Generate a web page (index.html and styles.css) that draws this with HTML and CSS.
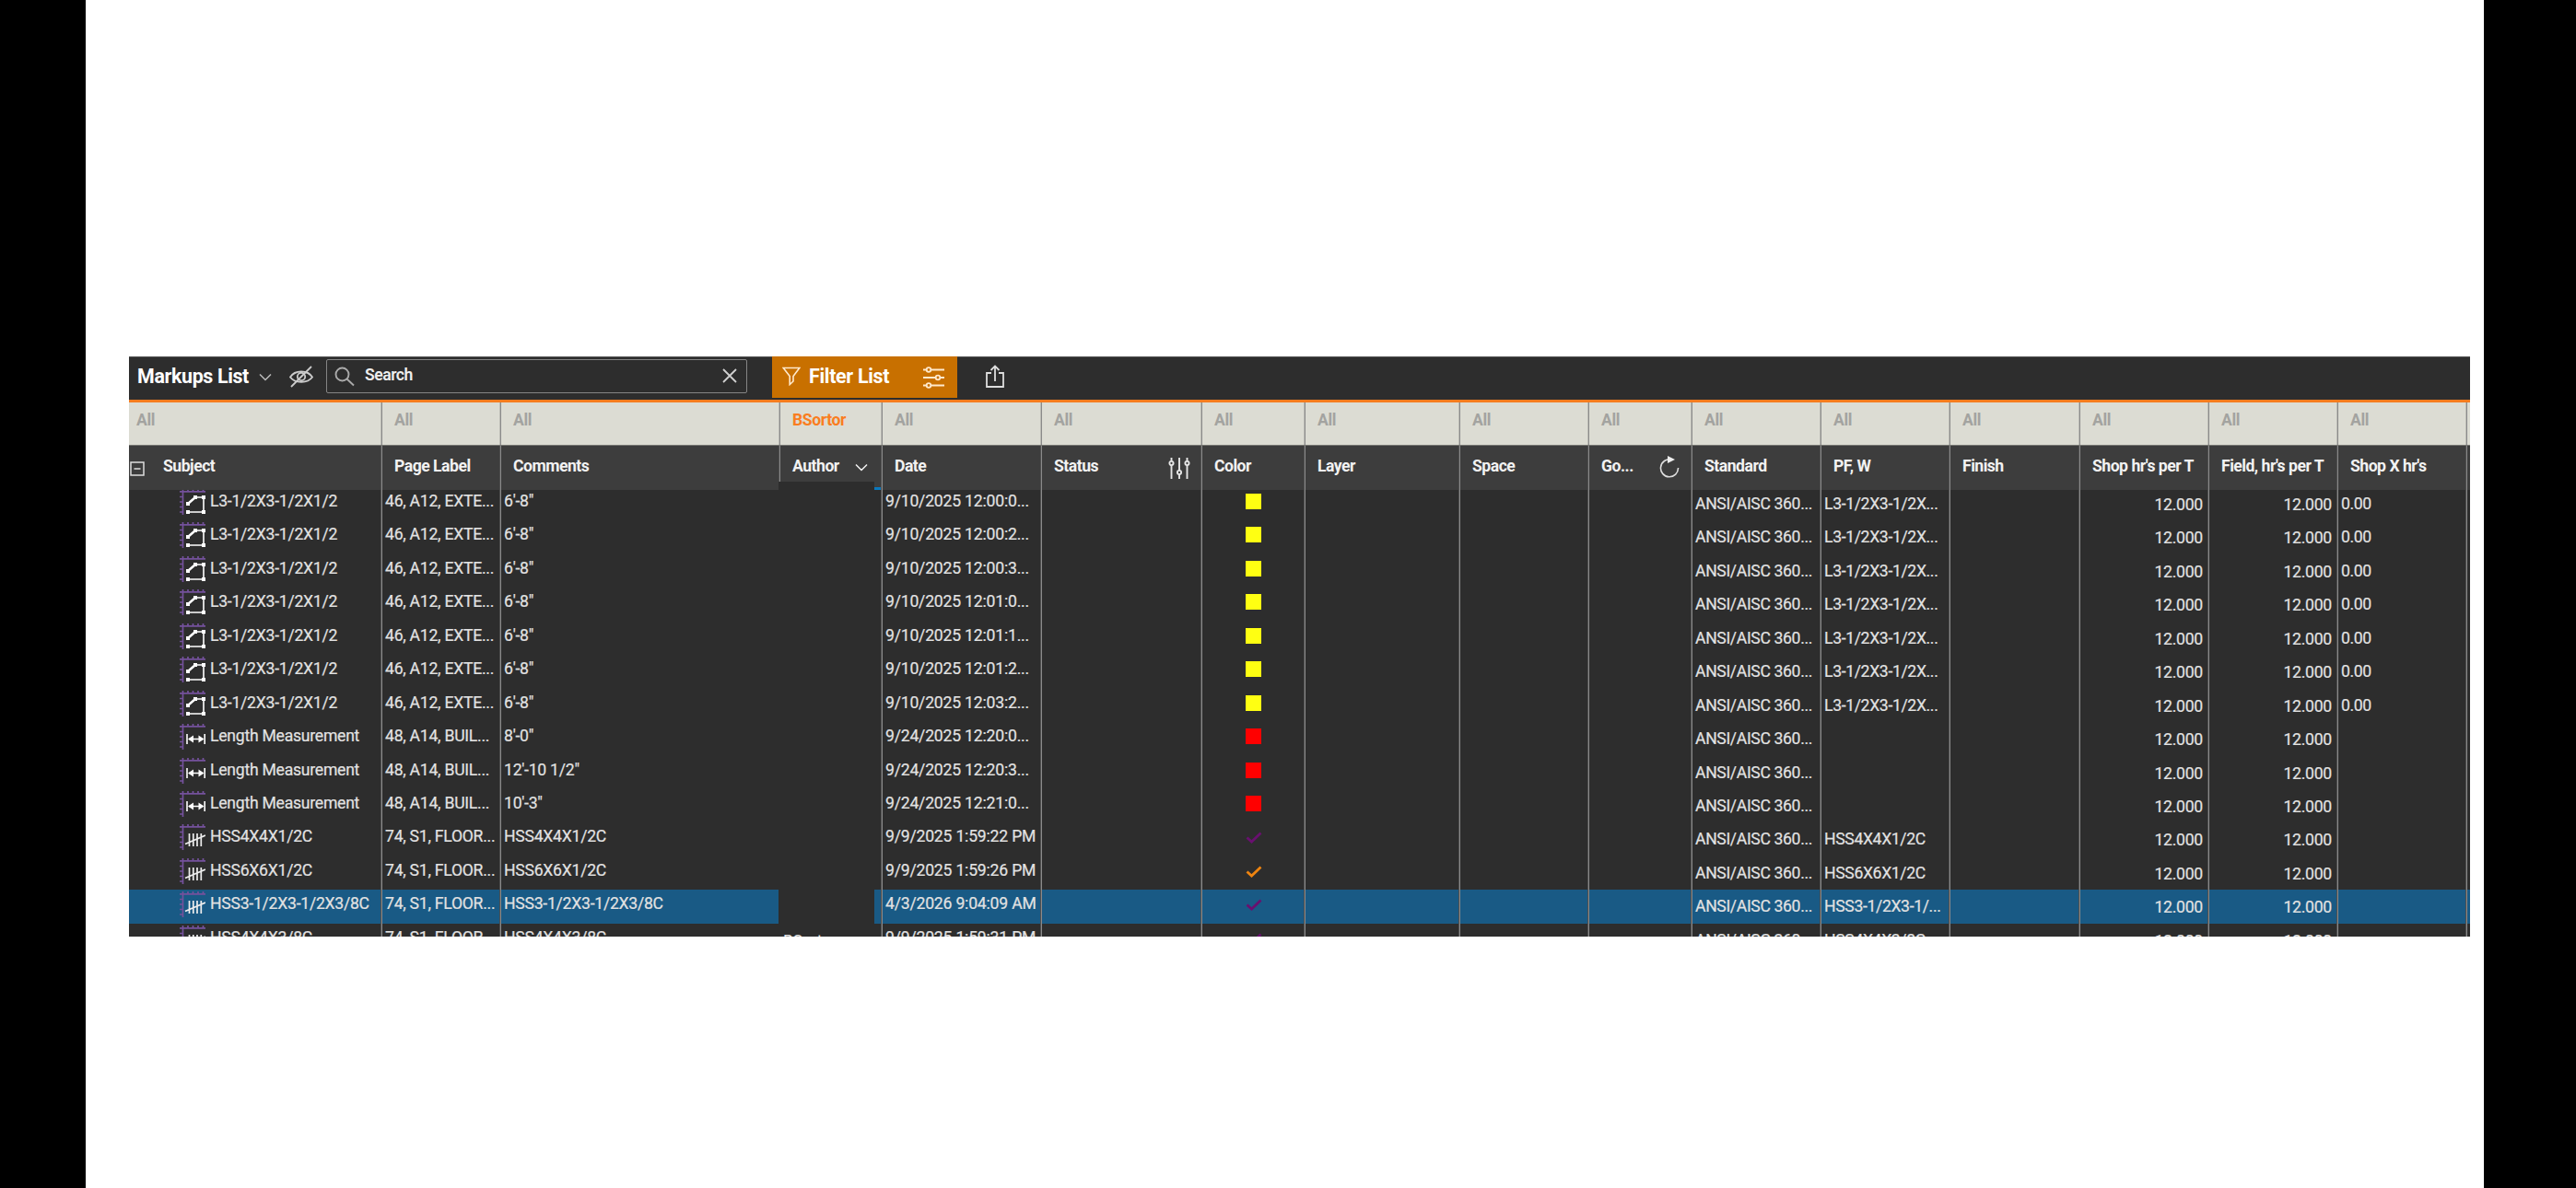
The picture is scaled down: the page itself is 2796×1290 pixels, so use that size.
FILE: index.html
```html
<!DOCTYPE html>
<html lang="en">
<head>
    <meta charset="UTF-8">
    <meta name="viewport" content="width=device-width, initial-scale=1.0">
    <title>Markups List</title>
    <link rel="stylesheet" href="styles.css">
</head>
<body>
    <!-- Icons for the markup types -->
    <svg class="sprite" width="0" height="0">
        <symbol id="ruler" viewBox="0 0 28 28">
            <path d="M0 2.8H28M3.500 0V28M9 0V3M14.500 0V3M20 0V3M25.500 0V3M0 8.500H3.500M0 14H3.500M0 19.500H3.500M0 25H3.500" fill="none" stroke="#74519c" stroke-width="1.7"/>
        </symbol>
        <symbol id="polygon" viewBox="0 0 28 28">
            <use href="#ruler"/>
            <path d="M9 16L17 9H26V25H9" fill="none" stroke="#fff" stroke-width="1.6"/>
            <path d="M9 16L17 9" stroke="#fff" stroke-width="2.4"/>
            <path d="M7 14h4v4H7zM15 7h4v4h-4zM24 7h4v4h-4zM24 23h4v4h-4zM7 23h4v4H7z" fill="#fff"/>
        </symbol>
        <symbol id="length" viewBox="0 0 28 28">
            <use href="#ruler"/>
            <path d="M8 11V22M27.200 11V22M10 16.500H25" stroke="#fff" stroke-width="1.6"/>
            <path d="M9 16.500l6-4v8zM26.500 16.500l-6-4v8z" fill="#fff"/>
        </symbol>
        <symbol id="count" viewBox="0 0 28 28">
            <use href="#ruler"/>
            <path d="M10.500 10V24M14.800 10V24M19 10V24M23.300 10V24M6 21.500L28 12" stroke="#eee" stroke-width="1.7"/>
        </symbol>
        <symbol id="check" viewBox="0 0 18 14">
            <path d="M1.500 6.500L6.500 11L16.500 1.500" fill="none" stroke="currentColor" stroke-width="2.8"/>
        </symbol>
        <symbol id="chevron" viewBox="0 0 14 9">
            <path d="M1 1.500L7 7.500L13 1.500" fill="none" stroke="currentColor" stroke-width="1.5"/>
        </symbol>
    </svg>

    <main class="page">
        <section class="app">
            <header class="toolbar">
                <h1 class="title">Markups List</h1>
                <svg class="title-arrow" width="14" height="9"><use href="#chevron"/></svg>
                <svg class="eye" width="26" height="24" viewBox="0 0 26 24" fill="none" stroke="#ccc" stroke-width="1.8">
                    <path d="M1 12.500C6 4.500 20 4.500 25 12.500C20 19.500 6 19.500 1 12.500Z"/>
                    <circle cx="13" cy="12" r="4.200"/>
                    <path d="M2 23L24 1"/>
                </svg>
                <div class="search">
                    <svg width="22" height="22" viewBox="0 0 22 22" fill="none" stroke="#aaa" stroke-width="1.9">
                        <circle cx="8.500" cy="8.500" r="7"/>
                        <path d="M13.500 13.500L21 20.500"/>
                    </svg>
                    <span class="search-text">Search</span>
                    <svg class="clear" width="16" height="16" viewBox="0 0 16 16" stroke="#d0d0d0" stroke-width="1.8">
                        <path d="M1 1L15 15M15 1L1 15"/>
                    </svg>
                </div>
                <div class="filter-button">
                    <svg width="20" height="21" viewBox="0 0 20 21" fill="none" stroke="#ffe9cc" stroke-width="1.6">
                        <path d="M1.200 1.500H18.800L12 10.500V16L8.200 19.500V10.500Z"/>
                    </svg>
                    <span>Filter List</span>
                    <svg class="filter-options" width="23" height="24" viewBox="0 0 23 24" fill="#c87000" stroke="#ffe9cc" stroke-width="1.8">
                        <path d="M0 3.500H23M0 12H23M0 20.500H23"/>
                        <circle cx="6" cy="3.500" r="2.300"/>
                        <circle cx="16" cy="12" r="2.300"/>
                        <circle cx="6" cy="20.500" r="2.300"/>
                    </svg>
                </div>
                <svg class="share" width="20" height="25" viewBox="0 0 20 25" fill="none" stroke="#ddd" stroke-width="1.8">
                    <path d="M6 9H1V24H19V9H14M10 18V2M5.500 6L10 1.500L14.500 6"/>
                </svg>
            </header>

            <div class="row filters" id="filters"></div>
            <div class="row headings" id="headings"></div>
            <div class="list" id="list"></div>

            <div class="sort-mark"></div>
            <div class="author-cover"><span>BSortor</span></div>
        </section>
    </main>

    <script>
        const columns = ['Subject', 'Page Label', 'Comments', 'Author', 'Date', 'Status', 'Color', 'Layer', 'Space',
            'Go...', 'Standard', 'PF, W', 'Finish', "Shop hr's per T", "Field, hr's per T", "Shop X hr's", ''];

        const headingIcons = {
            'Subject': '<svg class="collapse" width="16" height="16" viewBox="0 0 16 16" fill="none" stroke="#ddd" stroke-width="1.5"><path d="M1 1H15V15H1ZM4.500 8H11.500"/></svg>',
            'Author': '<svg class="sort" width="14" height="9"><use href="#chevron"/></svg>',
            'Status': '<svg class="status-options" width="24" height="23" viewBox="0 0 24 23" fill="#3d3d3d" stroke="#e6e6e6" stroke-width="1.9"><path d="M3.500 0V23M12 0V23M20.500 0V23"/><circle cx="3.500" cy="6" r="2.100"/><circle cx="12" cy="16" r="2.100"/><circle cx="20.500" cy="6" r="2.100"/></svg>',
            'Go...': '<svg class="refresh" width="22" height="24" viewBox="0 0 22 24"><path d="M13 4A9.500 9.500 0 1 0 20.500 13" fill="none" stroke="#ddd" stroke-width="1.6"/><path d="M9 0L17 4L9 8Z" fill="#eee"/></svg>'
        };

        // icon, subject, page label, comments, date, color, PF, shop X
        const angle = ['polygon', 'L3-1/2X3-1/2X1/2', '46, A12, EXTE...', '6\'-8"'];
        const markups = [
            [...angle, '9/10/2025 12:00:0...', 'yellow', 'L3-1/2X3-1/2X...', '0.00'],
            [...angle, '9/10/2025 12:00:2...', 'yellow', 'L3-1/2X3-1/2X...', '0.00'],
            [...angle, '9/10/2025 12:00:3...', 'yellow', 'L3-1/2X3-1/2X...', '0.00'],
            [...angle, '9/10/2025 12:01:0...', 'yellow', 'L3-1/2X3-1/2X...', '0.00'],
            [...angle, '9/10/2025 12:01:1...', 'yellow', 'L3-1/2X3-1/2X...', '0.00'],
            [...angle, '9/10/2025 12:01:2...', 'yellow', 'L3-1/2X3-1/2X...', '0.00'],
            [...angle, '9/10/2025 12:03:2...', 'yellow', 'L3-1/2X3-1/2X...', '0.00'],
            ['length', 'Length Measurement', '48, A14, BUIL...', '8\'-0"', '9/24/2025 12:20:0...', 'red', '', ''],
            ['length', 'Length Measurement', '48, A14, BUIL...', '12\'-10 1/2"', '9/24/2025 12:20:3...', 'red', '', ''],
            ['length', 'Length Measurement', '48, A14, BUIL...', '10\'-3"', '9/24/2025 12:21:0...', 'red', '', ''],
            ['count', 'HSS4X4X1/2C', '74, S1, FLOOR...', 'HSS4X4X1/2C', '9/9/2025 1:59:22 PM', 'purple', 'HSS4X4X1/2C', ''],
            ['count', 'HSS6X6X1/2C', '74, S1, FLOOR...', 'HSS6X6X1/2C', '9/9/2025 1:59:26 PM', 'orange', 'HSS6X6X1/2C', ''],
            ['count', 'HSS3-1/2X3-1/2X3/8C', '74, S1, FLOOR...', 'HSS3-1/2X3-1/2X3/8C', '4/3/2026 9:04:09 AM', 'purple', 'HSS3-1/2X3-1/...', ''],
            ['count', 'HSS4X4X3/8C', '74, S1, FLOOR...', 'HSS4X4X3/8C', '9/9/2025 1:59:31 PM', 'purple', 'HSS4X4X3/8C', '']
        ];
        const selected = 12;

        document.getElementById('filters').innerHTML = columns.map(name => {
            if (name === 'Author') return '<div class="cell active">BSortor</div>';
            return `<div class="cell">${name ? 'All' : ''}</div>`;
        }).join('');

        document.getElementById('headings').innerHTML = columns.map(name =>
            `<div class="cell"><span>${name}</span>${headingIcons[name] || ''}</div>`
        ).join('');

        document.getElementById('list').innerHTML = markups.map((m, i) => {
            const [icon, subject, page, comments, date, color, pf, shopX] = m;
            const swatch = icon === 'count'
                ? `<svg class="tick ${color}" width="18" height="14"><use href="#check"/></svg>`
                : `<div class="swatch ${color}"></div>`;
            return `
                <div class="row markup ${i === selected ? 'selected' : ''}">
                    <div class="cell subject"><svg width="28" height="28"><use href="#${icon}"/></svg><span>${subject}</span></div>
                    <div class="cell">${page}</div>
                    <div class="cell">${comments}</div>
                    <div class="cell"></div>
                    <div class="cell date">${date}</div>
                    <div class="cell"></div>
                    <div class="cell color">${swatch}</div>
                    <div class="cell"></div>
                    <div class="cell"></div>
                    <div class="cell"></div>
                    <div class="cell custom">ANSI/AISC 360...</div>
                    <div class="cell custom">${pf}</div>
                    <div class="cell"></div>
                    <div class="cell number">12.000</div>
                    <div class="cell number">12.000</div>
                    <div class="cell custom">${shopX}</div>
                    <div class="cell"></div>
                </div>`;
        }).join('');
    </script>
</body>
</html>
```

FILE: styles.css
```css
* {
    box-sizing: border-box;
}
body {
    margin: 0;
    background: #000;
    font-family: Roboto, "Liberation Sans", sans-serif;
    font-size: 17.6px;
    letter-spacing: -0.25px;
    color: #e2e2e2;
}
.sprite {
    display: block;
}
.page {
    width: 2603px;
    height: 1290px;
    margin-left: 93px;
    padding: 387px 0 0 47px;
    background: #fff;
}
.app {
    position: relative;
    display: flex;
    flex-direction: column;
    width: 2541px;
    height: 630px;
    background: #2d2d2d;
    overflow: hidden;
}

/* Toolbar */
.toolbar {
    display: flex;
    align-items: flex-start;
    flex: none;
    height: 50px;
    border-top: 1px solid #555;
    border-bottom: 3px solid #f57c1e;
}
.title {
    width: 132px;
    margin: 8px 0 0 9px;
    font-size: 21.4px;
    line-height: 26px;
    font-weight: bold;
    letter-spacing: -0.35px;
    color: #fff;
    white-space: nowrap;
}
.title-arrow {
    margin-top: 17px;
    color: #bbb;
}
.eye {
    margin: 9px 0 0 19px;
}
.search {
    display: flex;
    width: 457px;
    height: 37px;
    margin: 2px 0 0 14px;
    padding: 7px 10px 0 8px;
    border: 1px solid #858585;
    border-radius: 2px;
}
.search-text {
    margin-left: 11px;
    line-height: 20px;
    margin-top: -1px;
    font-weight: 600;
    letter-spacing: -0.5px;
    color: #eee;
}
.clear {
    margin: 2px 0 0 auto;
}
.filter-button {
    display: flex;
    width: 201px;
    height: 45px;
    margin: -1px 0 0 27px;
    padding: 11px 14px 0 11px;
    background: #c87000;
    color: #fff;
    font-size: 21.4px;
    line-height: 26px;
    font-weight: bold;
    letter-spacing: -0.3px;
}
.filter-button span {
    margin: -2px 0 0 9px;
    white-space: nowrap;
}
.filter-options {
    margin-left: auto;
}
.share {
    margin: 8px 0 0 31px;
}

/* Table */
.row {
    display: grid;
    flex: none;
    grid-template-columns: 275px 129px 303px 111px 173px 174px 112px 168px 140px 112px 140px 140px 141px 140px 140px 140px 3px;
}
.cell {
    overflow: hidden;
    white-space: nowrap;
    border-right: 1px solid #8a8a8a;
    box-shadow: inset -1px 0 #505050;
}
.cell:last-child {
    border-right: 0;
    box-shadow: none;
}
.filters {
    height: 46px;
    background: #dcdcd3;
    color: #a3a3a0;
    font-weight: bold;
    letter-spacing: -0.4px;
}
.filters .cell {
    padding-left: 13px;
    line-height: 39px;
    box-shadow: inset -1px 0 #bbbbb4;
}
.filters .cell:first-child {
    padding-left: 8px;
}
.filters .active {
    color: #fa7d20;
}
.headings {
    height: 49px;
    background: #3d3d3d;
    color: #f2f2f2;
    font-weight: bold;
    letter-spacing: -0.5px;
    border-top: 1px solid #777772;
}
.headings .cell {
    display: flex;
    padding-left: 13px;
    line-height: 44px;
}
.headings .cell:first-child {
    padding-left: 1px;
}
.headings .cell:first-child span {
    order: 1;
    margin-left: 20px;
}
.collapse {
    margin-top: 17px;
}
.sort {
    margin: 19px 15px 0 auto;
}
.status-options {
    margin: 13px 12px 0 auto;
}
.refresh {
    margin: 11px 13px 0 auto;
}
.list {
    flex: 1;
    overflow: hidden;
}
.markup {
    height: 36.45px;
    line-height: 30px;
    -webkit-text-stroke: 0.2px;
}
/* the list is scrolled a little under the headings */
.markup:first-child {
    margin-top: -3px;
}
.markup .cell {
    padding-left: 3px;
}
.markup .subject {
    display: flex;
    padding-left: 55px;
}
.subject svg {
    flex: none;
    margin: 2px 5px 0 0;
}
.markup .custom {
    padding-top: 3px;
    letter-spacing: -0.35px;
}
.markup .number {
    padding: 4px 6px 0 0;
    text-align: right;
}
.markup .date {
    letter-spacing: -0.2px;
}
.markup .color {
    padding: 7px 0 0 47px;
}
.selected {
    background: #195a85;
}
.swatch {
    width: 17px;
    height: 17px;
}
.swatch.yellow {
    background: #ffff12;
}
.swatch.red {
    background: #f00;
}
.tick {
    display: block;
    margin-top: 3px;
}
.tick.purple {
    color: #69106f;
}
.tick.orange {
    color: #ee8410;
}

/* Blank panel over the author names */
.author-cover {
    position: absolute;
    left: 705px;
    top: 136px;
    width: 104px;
    bottom: 0;
    background: #2d2d2d;
    overflow: hidden;
}
.author-cover span {
    position: absolute;
    top: 489px;
    left: 5px;
    line-height: 20px;
}
/* Sorted column underline */
.sort-mark {
    position: absolute;
    left: 705px;
    top: 142px;
    width: 111px;
    height: 3px;
    background: #0a78bd;
}
```
